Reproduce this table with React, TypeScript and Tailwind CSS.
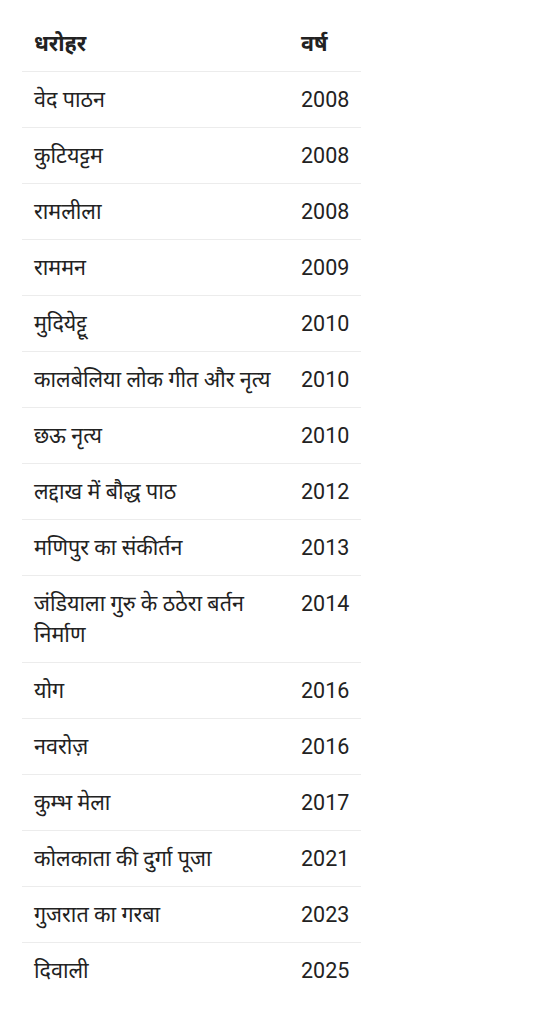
const rows: [string, string][] = [
  ['वेद पाठन', '2008'],
  ['कुटियट्टम', '2008'],
  ['रामलीला', '2008'],
  ['राममन', '2009'],
  ['मुदियेट्टू', '2010'],
  ['कालबेलिया लोक गीत और नृत्य', '2010'],
  ['छऊ नृत्य', '2010'],
  ['लद्दाख में बौद्ध पाठ', '2012'],
  ['मणिपुर का संकीर्तन', '2013'],
  ['जंडियाला गुरु के ठठेरा बर्तन निर्माण', '2014'],
  ['योग', '2016'],
  ['नवरोज़', '2016'],
  ['कुम्भ मेला', '2017'],
  ['कोलकाता की दुर्गा पूजा', '2021'],
  ['गुजरात का गरबा', '2023'],
  ['दिवाली', '2025'],
]

export default function App() {
  return (
    <div
      className="min-h-screen bg-white pt-4 pl-[22px] text-[#222]"
      style={{ fontFamily: 'Roboto, "Noto Sans Devanagari", "Noto Sans", sans-serif' }}
    >
      <table className="border-collapse text-[21.5px] leading-[31px]">
        <thead>
          <tr className="border-b border-[#ececec]">
            <th className="w-[267px] px-3 py-3 text-left align-top font-bold">धरोहर</th>
            <th className="w-[72px] px-3 py-3 text-left align-top font-bold">वर्ष</th>
          </tr>
        </thead>
        <tbody>
          {rows.map(([name, year], i) => (
            <tr key={name} className={i < rows.length - 1 ? 'border-b border-[#ececec]' : ''}>
              <td className="px-3 py-3 align-top">{name}</td>
              <td className="px-3 py-3 align-top">{year}</td>
            </tr>
          ))}
        </tbody>
      </table>
    </div>
  )
}
